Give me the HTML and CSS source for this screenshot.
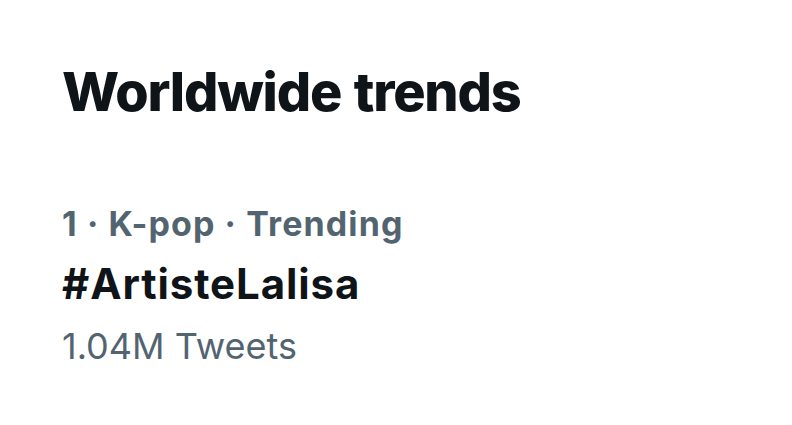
FILE: index.html
```html
<!DOCTYPE html>
<html lang="en">
<head>
<meta charset="utf-8">
<link rel="stylesheet" href="styles.css">
</head>
<body>
<main class="panel">
  <h1 class="title">Worldwide trends</h1>
  <section class="trend">
    <div class="meta">1 · K-pop · Trending</div>
    <div class="tag">#ArtisteLalisa</div>
    <div class="count">1.04M Tweets</div>
  </section>
</main>
</body>
</html>
```
FILE: styles.css
```css
html, body {
  margin: 0;
  padding: 0;
  background: #ffffff;
}
body {
  width: 792px;
  height: 425px;
  overflow: hidden;
  font-family: Inter, "Noto Sans", sans-serif;
}
.panel {
  padding: 60px 0 0 62px;
}
.title {
  margin: 0;
  font-size: 54px;
  font-weight: 800;
  line-height: 64px;
  color: #0f1419;
  letter-spacing: -1.2px;
  word-spacing: 2px;
}
.trend {
  margin-top: 80px;
  display: flex;
  flex-direction: column;
  gap: 16px;
}
.meta {
  font-size: 34px;
  font-weight: 700;
  line-height: 40px;
  color: #536471;
  letter-spacing: 1.1px;
}
.tag {
  font-size: 42px;
  font-weight: 700;
  line-height: 48px;
  color: #0f1419;
  letter-spacing: 0.9px;
}
.count {
  font-size: 36px;
  font-weight: 400;
  line-height: 44px;
  color: #536471;
}
```
